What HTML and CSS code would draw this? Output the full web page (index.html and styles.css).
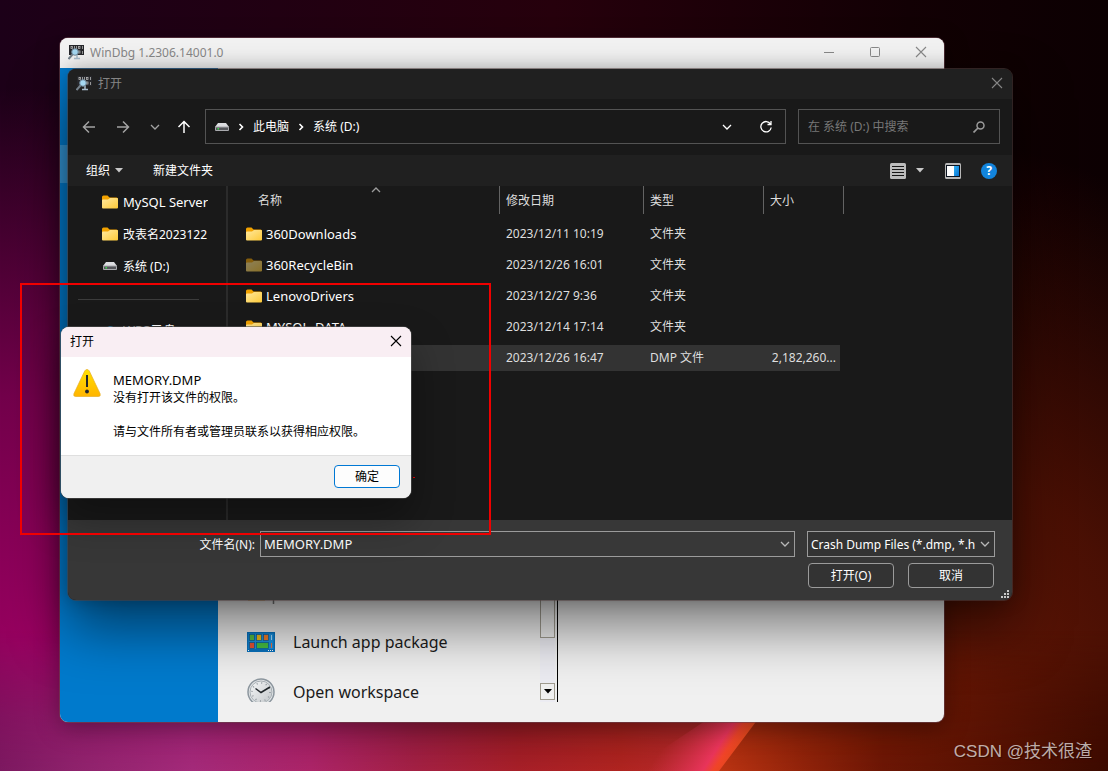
FILE: index.html
```html
<!DOCTYPE html>
<html lang="zh-CN">
<head>
<meta charset="utf-8">
<title>WinDbg</title>
<link rel="stylesheet" href="styles.css">
</head>
<body>
<svg class="defs" aria-hidden="true">
  <defs>
    <linearGradient id="gold" x1="0" y1="0" x2="1" y2="1"><stop offset="0" stop-color="#ffe9a0"/><stop offset="1" stop-color="#fdc937"/></linearGradient>
    <linearGradient id="warn" x1="0" y1="0" x2="0" y2="1"><stop offset="0" stop-color="#ffe000"/><stop offset="1" stop-color="#ffb400"/></linearGradient>
    <linearGradient id="metal" x1="0" y1="0" x2="1" y2="1"><stop offset="0" stop-color="#f7f9fa"/><stop offset="1" stop-color="#c3c7ca"/></linearGradient>
    <linearGradient id="pane" x1="0" y1="0" x2="1" y2="1"><stop offset="0" stop-color="#30b0f4"/><stop offset="1" stop-color="#0674d4"/></linearGradient>
  </defs>
  <symbol id="folder" viewBox="0 0 16 14"><path d="M0 12V2Q0 .5 1.500 .5H5.500L7.500 2.500H14.500Q16 2.500 16 4V12Z" fill="#f2a200"/><path d="M0 5.500Q0 4.500 1 4.500H6L8 3H15Q16 3 16 4V12.500Q16 13.500 15 13.500H1Q0 13.500 0 12.500Z" fill="url(#gold)"/></symbol>
  <symbol id="drive" viewBox="0 0 14 8"><path d="M3 0H11L14 4H0Z" fill="#dcdde0"/><rect y="3.500" width="14" height="4.500" rx="1" fill="#a9aaae"/><rect x="1" y="4.500" width="12" height="2.500" fill="#55565a"/><rect x="2.500" y="5" width="1.500" height="1.500" fill="#3be04a"/></symbol>
  <symbol id="debugger" viewBox="0 0 16 16"><rect x="1" y="1" width="15" height="10" fill="#26272b"/><g fill="none" stroke="#b4b4b4" stroke-width=".8"><rect x="3" y="2.500" width="1.500" height="2"/><path d="M6.500 2V5M8.500 2V5M14.500 2V5M14.500 7V10"/><rect x="10.500" y="2.500" width="1.500" height="2"/><rect x="10.500" y="7" width="1.500" height="2"/></g><path d="M9 11V14M6 14.500H12" stroke="#a8bccb" stroke-width="1.500"/><path d="M4.500 10.500L.5 15" stroke="#75818b" stroke-width="2"/><circle cx="7" cy="8" r="3.300" fill="#a5d8f2" stroke="#71889a"/></symbol>
  <symbol id="close" viewBox="0 0 12 12"><path d="M1 1L11 11M11 1L1 11" fill="none" stroke="currentColor" stroke-width="1.100"/></symbol>
  <symbol id="down" viewBox="0 0 10 6"><path d="M1 1L5 5L9 1" fill="none" stroke="currentColor" stroke-width="1.300"/></symbol>
  <symbol id="right" viewBox="0 0 6 8"><path d="M1.500 1L4.500 4L1.500 7" fill="none" stroke="currentColor" stroke-width="1.600"/></symbol>
  <symbol id="arrow" viewBox="0 0 14 14"><path d="M13 7H1.500M7 1.500L1.500 7L7 12.500" fill="none" stroke="currentColor" stroke-width="1.500"/></symbol>
  <symbol id="triangle" viewBox="0 0 8 5"><path d="M0 0H8L4 4.500Z" fill="currentColor"/></symbol>
</svg>

<main class="desktop">
  <svg class="bloom" viewBox="0 0 1108 140" preserveAspectRatio="none" aria-hidden="true">
    <defs>
      <linearGradient id="bloom-left" gradientUnits="userSpaceOnUse" x1="0" y1="0" x2="740" y2="0"><stop offset="0" stop-color="#7c1860"/><stop offset=".1" stop-color="#8e226c"/><stop offset=".26" stop-color="#a42a7a"/><stop offset=".42" stop-color="#ac2468"/><stop offset=".56" stop-color="#a42044"/><stop offset=".7" stop-color="#a81f28"/><stop offset=".84" stop-color="#b02420"/><stop offset="1" stop-color="#bc2c34"/></linearGradient>
      <linearGradient id="bloom-right" gradientUnits="userSpaceOnUse" x1="720" y1="0" x2="1108" y2="0"><stop offset="0" stop-color="#bc3412"/><stop offset=".2" stop-color="#94240a"/><stop offset=".42" stop-color="#6c1604"/><stop offset=".65" stop-color="#5a1202"/><stop offset="1" stop-color="#3c0a00"/></linearGradient>
      <linearGradient id="petal" gradientUnits="userSpaceOnUse" x1="686" y1="80" x2="740" y2="115"><stop offset="0" stop-color="#d03048" stop-opacity="0"/><stop offset=".72" stop-color="#e8345a"/><stop offset=".86" stop-color="#f04428"/><stop offset="1" stop-color="#e4481c"/></linearGradient>
      <linearGradient id="rise" x1="0" y1="0" x2="0" y2="1"><stop offset="0" stop-color="#000"/><stop offset=".62" stop-color="#bbb"/><stop offset="1" stop-color="#fff"/></linearGradient>
      <mask id="bloom-mask"><rect width="1108" height="140" fill="url(#rise)"/></mask>
    </defs>
    <g mask="url(#bloom-mask)"><rect width="1108" height="140" fill="url(#bloom-left)"/><path d="M821 0H1108V140H719Z" fill="url(#bloom-right)"/></g>
    <path d="M720 80H764L719 140H630Z" fill="url(#petal)"/>
  </svg>

  <section class="debugger" aria-label="WinDbg">
    <header class="titlebar debugger-title">
      <svg class="app-icon"><use href="#debugger"/></svg>
      <h1 class="caption">WinDbg 1.2306.14001.0</h1>
      <div class="window-buttons">
        <button class="bare" aria-label="Minimize"><svg width="12" height="12"><path d="M1 6.500H11" stroke="currentColor"/></svg></button>
        <button class="bare" aria-label="Maximize"><svg width="12" height="12"><rect x="1.500" y="1.500" width="9" height="9" rx="1" fill="none" stroke="currentColor"/></svg></button>
        <button class="bare" aria-label="Close"><svg width="12" height="12"><use href="#close"/></svg></button>
      </div>
    </header>
    <div class="debugger-body">
      <nav class="rail"><div class="rail-current"></div></nav>
      <div class="start-list">
        <ul class="starts">
          <li class="start"><svg class="start-icon" viewBox="0 0 28 28"><path d="M1 4H18V22.500H1Z" fill="#e5a33c"/><path d="M26.500 12V26" stroke="#777" stroke-width="1.500"/></svg></li>
          <li class="start"><svg class="start-icon" viewBox="0 0 28 28"><rect y="4" width="28" height="20" fill="#0872be"/><rect x="1.500" y="5.500" width="25" height="15.500" fill="#1b92df"/><g stroke="#075b9d" stroke-width=".7"><rect x="2.500" y="6.500" width="5" height="6" fill="#57bd43"/><rect x="9.500" y="6.500" width="5" height="6" fill="#efbd18"/><rect x="16.500" y="6.500" width="5" height="6" fill="#f07c28"/><rect x="2.500" y="14.500" width="5" height="6" fill="#e75335"/><rect x="9.500" y="14.500" width="12" height="6" fill="#46be43"/></g><path d="M24.500 7V12" stroke="#a6ddff"/><path d="M24.500 15V20" stroke="#f07040"/><path d="M1 22.500H2.500M21 22.500H27" stroke="#fff" stroke-dasharray="1 1"/></svg><span>Launch app package</span></li>
          <li class="start"><svg class="start-icon" viewBox="0 0 28 28"><circle cx="14" cy="14" r="13" fill="#e5e8ea" stroke="#8d979f" stroke-width="1.500"/><circle cx="14" cy="14" r="11" fill="url(#metal)" stroke="#a8b0b5"/><circle cx="14" cy="14" r="9" fill="none" stroke="#8d959b" stroke-width="1.500" stroke-dasharray="1 3.710"/><path d="M8.500 10.500L14 14.500L23 9" fill="none" stroke="#22282c" stroke-width="1.500"/></svg><span>Open workspace</span></li>
        </ul>
        <div class="scrollbar">
          <div class="thumb"></div>
          <button class="scroll-down" aria-label="Scroll down"><svg width="8" height="5"><use href="#triangle"/></svg></button>
        </div>
      </div>
    </div>
  </section>

  <section class="picker" aria-label="打开">
    <header class="titlebar picker-title">
      <svg class="app-icon"><use href="#debugger"/></svg>
      <h2 class="caption">打开</h2>
      <button class="bare" aria-label="关闭"><svg width="12" height="12"><use href="#close"/></svg></button>
    </header>

    <div class="navigation">
      <div class="history">
        <button class="bare" aria-label="后退"><svg width="14" height="14"><use href="#arrow"/></svg></button>
        <button class="bare" aria-label="前进"><svg class="forward" width="14" height="14"><use href="#arrow"/></svg></button>
        <button class="bare" aria-label="最近"><svg width="10" height="6"><use href="#down"/></svg></button>
        <button class="bare up" aria-label="上移"><svg class="upward" width="14" height="14"><use href="#arrow"/></svg></button>
      </div>
      <div class="address">
        <svg width="14" height="8"><use href="#drive"/></svg>
        <svg width="6" height="8"><use href="#right"/></svg>
        <a href="#pc">此电脑</a>
        <svg width="6" height="8"><use href="#right"/></svg>
        <a href="#d">系统 (D:)</a>
        <button class="bare address-more" aria-label="历史记录"><svg width="10" height="6"><use href="#down"/></svg></button>
        <button class="bare" aria-label="刷新"><svg width="14" height="14"><path d="M11.500 4A5.200 5.200 0 1 0 12.200 7.500M12 1V4.500H8.500" fill="none" stroke="currentColor" stroke-width="1.300"/></svg></button>
      </div>
      <div class="search">
        <input type="search" aria-label="搜索" placeholder="在 系统 (D:) 中搜索">
        <svg width="12" height="12"><circle cx="7.500" cy="4.500" r="3.500" fill="none" stroke="currentColor" stroke-width="1.500"/><path d="M5 7L.5 11.500" stroke="currentColor" stroke-width="1.700"/></svg>
      </div>
    </div>

    <div class="toolbar">
      <button class="bare organize">组织 <svg width="8" height="5"><use href="#triangle"/></svg></button>
      <button class="bare">新建文件夹</button>
      <div class="views">
        <button class="bare view-mode" aria-label="视图"><svg width="16" height="16"><rect width="16" height="16" rx="1.500" fill="#bcbcbc"/><path d="M2 3.500H14M2 6.500H14M2 9.500H14M2 12.500H14" stroke="#161616"/></svg><svg width="8" height="5"><use href="#triangle"/></svg></button>
        <button class="bare" aria-label="预览窗格"><svg width="16" height="16"><rect width="16" height="16" rx="1.500" fill="#b7b7b7"/><rect x="1" y="2" width="14" height="12" fill="#0c1420"/><rect x="2" y="3" width="7" height="10" fill="#fff"/><rect x="9" y="3" width="5" height="10" fill="url(#pane)"/></svg></button>
        <button class="help" aria-label="帮助">?</button>
      </div>
    </div>

    <div class="browser">
      <nav class="tree">
        <a class="node" href="#mysql"><svg class="file-icon"><use href="#folder"/></svg><span class="latin">MySQL Server</span></a>
        <a class="node" href="#rename"><svg class="file-icon"><use href="#folder"/></svg><span>改表名2023122</span></a>
        <a class="node" href="#d"><svg class="file-icon" viewBox="-1 -3 16 14"><use href="#drive" width="14" height="8"/></svg><span>系统 (D:)</span></a>
        <hr class="divider">
        <a class="node" href="#wps"><svg class="file-icon" viewBox="0 0 16 14"><path d="M4 13A4 4 0 0 1 4 6A4.500 4.500 0 0 1 12 5A4 4 0 0 1 12 13Z" fill="#2aa6ee"/></svg><span class="latin">WPS云盘</span></a>
      </nav>
      <div class="files">
        <table class="listing">
          <colgroup><col class="col-name"><col class="col-date"><col class="col-type"><col class="col-size"></colgroup>
          <thead>
            <tr>
              <th scope="col"><span class="head head-name">名称<svg class="sort" width="10" height="6"><use href="#down"/></svg></span></th>
              <th scope="col"><span class="head">修改日期</span></th>
              <th scope="col"><span class="head">类型</span></th>
              <th scope="col"><span class="head">大小</span></th>
            </tr>
          </thead>
          <tbody>
            <tr><td><span class="file"><svg class="file-icon"><use href="#folder"/></svg>360Downloads</span></td><td>2023/12/11 10:19</td><td>文件夹</td><td></td></tr>
            <tr><td><span class="file"><svg class="file-icon dim"><use href="#folder"/></svg>360RecycleBin</span></td><td>2023/12/26 16:01</td><td>文件夹</td><td></td></tr>
            <tr><td><span class="file"><svg class="file-icon"><use href="#folder"/></svg>LenovoDrivers</span></td><td>2023/12/27 9:36</td><td>文件夹</td><td></td></tr>
            <tr><td><span class="file"><svg class="file-icon"><use href="#folder"/></svg>MYSQL_DATA</span></td><td>2023/12/14 17:14</td><td>文件夹</td><td></td></tr>
            <tr class="selected"><td></td><td>2023/12/26 16:47</td><td>DMP 文件</td><td class="size">2,182,260...</td></tr>
          </tbody>
        </table>
      </div>
    </div>

    <form class="picker-footer">
      <div class="name-row">
        <label class="name-label" for="filename">文件名(N):</label>
        <div class="field filename">
          <input id="filename" class="latin" type="text" value="MEMORY.DMP">
          <svg width="10" height="6"><use href="#down"/></svg>
        </div>
        <div class="field filter">
          <select aria-label="文件类型"><option>Crash Dump Files (*.dmp, *.hdmp)</option></select>
          <svg width="10" height="6"><use href="#down"/></svg>
        </div>
      </div>
      <div class="action-row">
        <button type="button" class="action">打开(O)</button>
        <button type="button" class="action">取消</button>
      </div>
    </form>
    <svg class="grip" width="8" height="8" aria-hidden="true"><path d="M6 0H8V2H6ZM3 3H5V5H3ZM6 3H8V5H6ZM0 6H2V8H0ZM3 6H5V8H3ZM6 6H8V8H6Z" fill="#c8c8c8"/></svg>
  </section>

  <section class="alert" role="alertdialog" aria-labelledby="alert-title">
    <header class="titlebar alert-title">
      <h2 class="caption" id="alert-title">打开</h2>
      <button class="bare" aria-label="关闭"><svg width="12" height="12"><use href="#close"/></svg></button>
    </header>
    <div class="alert-body">
      <svg class="alert-icon" viewBox="0 0 28 28"><path d="M14 .5Q15.500 .5 16.300 2L27 24.500Q28 27.500 25.500 27.500H2.500Q0 27.500 1 24.500L11.700 2Q12.500 .5 14 .5Z" fill="url(#warn)" stroke="#e7ad25" stroke-width=".7"/><path d="M14 6V18" stroke="#20242b" stroke-width="2"/><circle cx="14" cy="22.500" r="1.900" fill="#20242b"/></svg>
      <div class="message">
        <p class="latin">MEMORY.DMP</p>
        <p>没有打开该文件的权限。</p>
        <p class="after">请与文件所有者或管理员联系以获得相应权限。</p>
      </div>
    </div>
    <footer class="alert-footer"><button class="confirm">确定</button></footer>
  </section>

  <div class="highlight" aria-hidden="true"></div>
  <div class="dot" aria-hidden="true"></div>
  <p class="watermark">CSDN @技术很渣</p>
</main>
</body>
</html>
```
FILE: styles.css
```css
* { box-sizing: border-box; }

body {
  margin: 0;
  font-family: "Noto Sans", "Noto Sans CJK SC", sans-serif;
  font-size: 12px;
  line-height: 17px;
}

h1, h2, p, ul { margin: 0; padding: 0; }
svg { display: block; flex: none; }
a { color: inherit; text-decoration: none; }
button, input, select { font: inherit; color: inherit; }
.defs { position: absolute; width: 0; height: 0; }
.latin { font-size: 13px; }

.bare {
  display: flex;
  align-items: center;
  border: 0;
  padding: 0;
  background: none;
}

/* Desktop and wallpaper */
.desktop {
  position: relative;
  height: 100vh;
  overflow: hidden;
  background:
    radial-gradient(ellipse 480px 560px at 2% 84%, #980060 0%, rgba(130, 0, 84, .85) 45%, transparent 100%),
    radial-gradient(ellipse 500px 600px at 84% 96%, #681806 0%, rgba(84, 18, 4, .85) 45%, transparent 100%),
    linear-gradient(90deg, #1c0018 0%, #26000c 50%, #120004 82%, #0c0002 100%);
}

.bloom {
  position: absolute;
  left: 0;
  bottom: 0;
  width: 100%;
  height: 140px;
}

.titlebar {
  display: flex;
  align-items: center;
  flex: none;
  height: 30px;
}

.caption { flex: 1; font-size: 12px; font-weight: 400; }
.app-icon { width: 16px; height: 16px; margin-right: 6px; }

/* Debugger window */
.debugger {
  position: absolute;
  inset: 38px 164px 49px 60px;
  display: flex;
  flex-direction: column;
  overflow: hidden;
  border-radius: 8px;
  background: #f0f0f0;
  box-shadow: 0 0 0 1px rgba(110, 70, 80, .6), 0 6px 24px rgba(0, 0, 0, .35);
}

.debugger-title { padding: 0 17px 2px 8px; background: #f3f3f3; color: #898989; }
.window-buttons { display: flex; gap: 34px; }
.debugger-body { display: flex; flex: 1; min-height: 0; }
.rail { width: 158px; padding-top: 77px; background: #007acc; }
.rail-current { height: 38px; background: #3395d6; }

.start-list {
  display: flex;
  width: 340px;
  margin: 8px 0 20px;
  overflow: hidden;
  border-right: 1px solid #000;
}

.starts {
  display: flex;
  flex: 1;
  flex-direction: column;
  justify-content: flex-end;
  margin-bottom: -15px;
  list-style: none;
}

.start {
  display: flex;
  align-items: center;
  flex: none;
  gap: 18px;
  height: 50px;
  padding-left: 29px;
  color: #1b1b1b;
  font-size: 16px;
}

.start-icon { width: 28px; height: 28px; }

.scrollbar {
  display: flex;
  flex-direction: column;
  justify-content: space-between;
  width: 15px;
  margin-right: 2px;
  padding-bottom: 2px;
  background: #ececf2;
}

.thumb { height: 90%; border: 1px solid #a09c90; background: #f0f0f0; }

.scroll-down {
  display: grid;
  place-items: center;
  height: 17px;
  padding: 0;
  border: 1px solid #a09c90;
  background: #f0f0f0;
  color: #000;
}

/* File picker window */
.picker {
  position: absolute;
  inset: 69px 96px 171px 68px;
  display: flex;
  flex-direction: column;
  overflow: hidden;
  border-radius: 8px;
  background: #191919;
  color: #fff;
  box-shadow: 0 0 0 1px rgba(80, 64, 64, .55), 0 28px 56px rgba(0, 0, 0, .5), 0 0 18px rgba(0, 0, 0, .25);
}

.picker-title { padding: 0 9px 2px 8px; background: #202020; color: #858585; }

.navigation {
  display: flex;
  flex: none;
  padding: 10px 12px 11px 14px;
}

.history { display: flex; width: 123px; gap: 20px; color: #a3a3a3; }
.history .up { margin-left: -3px; color: #fff; }
.forward { transform: rotate(180deg); }
.upward { transform: rotate(90deg); }

.address {
  display: flex;
  align-items: center;
  flex: 1;
  gap: 9px;
  height: 35px;
  padding: 0 12px 0 9px;
  border: 1px solid #535353;
}

.address-more { margin: 0 18px 0 auto; }

.search {
  display: flex;
  align-items: center;
  width: 202px;
  height: 35px;
  margin-left: 12px;
  padding: 0 14px 0 9px;
  border: 1px solid #535353;
  color: #9a9a9a;
}

.search input {
  flex: 1;
  min-width: 0;
  padding: 0;
  border: 0;
  outline: 0;
  background: none;
}

.search input::placeholder { color: #777; opacity: 1; }

.toolbar {
  display: flex;
  align-items: center;
  flex: none;
  gap: 30px;
  height: 31px;
  padding: 0 15px 0 18px;
  background: #202020;
}

.organize { gap: 5px; }
.organize svg, .view-mode { color: #c8c8c8; }
.views { display: flex; align-items: center; gap: 21px; margin-left: auto; }
.view-mode { gap: 10px; }
.views .help { margin-left: -1px; }

.help {
  width: 16px;
  height: 16px;
  padding: 0;
  border: 0;
  border-radius: 50%;
  background: #1284dc;
  font-size: 12px;
  font-weight: 700;
  line-height: 16px;
}

.browser { display: flex; flex: 1; min-height: 0; }
.tree { width: 160px; border-right: 2px solid #2b2b2b; }

.node {
  display: flex;
  align-items: center;
  gap: 5px;
  height: 32px;
  padding: 0 18px 0 34px;
  white-space: nowrap;
}

.node span { overflow: hidden; }
.file-icon { width: 16px; height: 14px; }
.dim { opacity: .5; }

.divider {
  height: 1px;
  margin: 17px 27px 14px 10px;
  border: 0;
  background: #3c3c3c;
}

.files { flex: 1; overflow: hidden; color: #dedede; }
.listing { width: 616px; table-layout: fixed; border-collapse: separate; border-spacing: 0; }
.col-name { width: 272px; }
.col-date { width: 144px; }
.col-type { width: 120px; }
.col-size { width: 80px; }
.listing th { height: 32px; padding: 0; font-weight: 400; text-align: left; vertical-align: top; }

.head {
  position: relative;
  display: flex;
  align-items: center;
  height: 28px;
  padding-left: 6px;
  border-right: 1px solid #636363;
}

.head-name { padding-left: 30px; }
.sort { position: absolute; top: 1px; left: 143px; color: #9c9c9c; transform: rotate(180deg); }

.listing td {
  height: 31px;
  padding: 0 0 0 6px;
  border: solid transparent;
  border-width: 3px 0 2px;
  background-clip: padding-box;
  line-height: 26px;
  white-space: nowrap;
}

.listing td:first-child { padding-left: 18px; font-size: 13px; color: #fff; }
.listing td:last-child { border-right-width: 4px; }
.file { display: flex; align-items: center; gap: 4px; line-height: 24px; }
.selected td { background-color: #333; }
.listing .size { padding: 0 4px 0 0; text-align: right; }

.picker-footer {
  display: flex;
  flex: none;
  flex-direction: column;
  gap: 6px;
  padding: 11px 17px 12px 129px;
  background: #373737;
}

.name-row { display: flex; align-items: center; gap: 5px; }
.name-label { width: 58px; text-align: right; white-space: nowrap; }

.field {
  display: flex;
  align-items: center;
  height: 26px;
  padding: 0 4px 0 3px;
  border: 1px solid #9b9b9b;
  background: #333;
}

.field svg { color: #b8b8b8; }
.filename { flex: 1; min-width: 0; background: #383838; }
.filter { width: 188px; margin-left: 7px; }

.field input, .field select {
  flex: 1;
  min-width: 0;
  margin-right: 5px;
  padding: 0;
  border: 0;
  outline: 0;
  appearance: none;
  background: none;
}

.action-row { display: flex; justify-content: flex-end; gap: 14px; padding-right: 1px; }

.action {
  width: 86px;
  height: 25px;
  padding: 0;
  border: 1px solid #9b9b9b;
  border-radius: 4px;
  background: #333;
}

.grip { position: absolute; right: 3px; bottom: 2px; }

/* Permission alert */
.alert {
  position: absolute;
  top: 327px;
  left: 61px;
  width: 350px;
  overflow: hidden;
  border-radius: 8px;
  background: #fff;
  color: #000;
  box-shadow: 0 0 0 1px rgba(80, 80, 80, .6), 0 20px 40px rgba(0, 0, 0, .35);
}

.alert-title { padding: 0 9px 2px; background: #f9eef3; }
.alert-body { display: flex; gap: 12px; padding: 12px 12px 15px; }
.alert-icon { width: 28px; height: 28px; }
.message { padding-top: 3px; }
.after { margin-top: 17px; }

.alert-footer {
  display: flex;
  justify-content: flex-end;
  padding: 9px 11px 10px;
  border-top: 1px solid #dfdfdf;
  background: #f0f0f0;
}

.confirm {
  width: 66px;
  height: 23px;
  padding: 0;
  border: 1px solid #0078d4;
  border-radius: 4px;
  background: #fdfdfd;
}

/* Markup drawn over the desktop */
.highlight {
  position: absolute;
  top: 283px;
  left: 20px;
  width: 471px;
  height: 252px;
  border: 2px solid #f00000;
  pointer-events: none;
}

.dot { position: absolute; top: 477px; left: 413px; width: 2px; height: 1px; background: #c00; }

.watermark {
  position: absolute;
  right: 16px;
  bottom: 7px;
  color: rgba(255, 255, 255, .68);
  font-family: "Liberation Sans", "Noto Sans CJK SC", sans-serif;
  font-size: 17px;
  line-height: 24px;
  text-shadow: 1px 1px 1px rgba(0, 0, 0, .4);
}
```
